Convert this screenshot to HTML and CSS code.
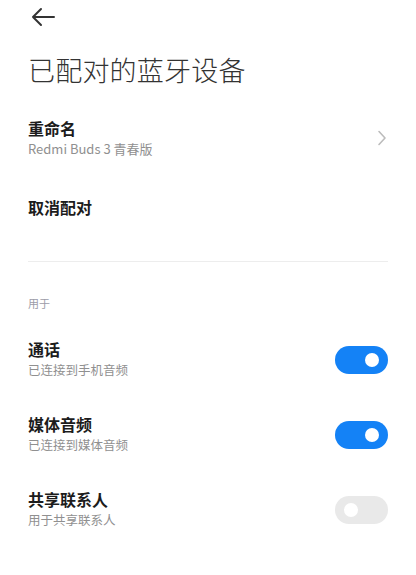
FILE: index.html
```html
<!DOCTYPE html>
<html lang="zh-CN">
  <head>
    <meta charset="UTF-8" />
    <meta name="viewport" content="width=device-width, initial-scale=1" />
    <title>已配对的蓝牙设备</title>
    <link rel="stylesheet" href="styles.css">
  </head>
  <body>
    <div class="page">
      <div class="toolbar">
        <svg class="back" width="26" height="20" viewBox="0 0 26 20">
          <path d="M3 10 H24 M11 2 L3 10 L11 18" fill="none" stroke="#333" stroke-width="2" stroke-linecap="round" stroke-linejoin="round" />
        </svg>
      </div>

      <h1>已配对的蓝牙设备</h1>

      <div class="item rename">
        <div class="text">
          <div class="title">重命名</div>
          <div class="summary">Redmi Buds 3 青春版</div>
        </div>
        <svg class="chevron" width="10" height="16" viewBox="0 0 10 16">
          <path d="M2 1.5 L8 8 L2 14.5" fill="none" stroke="#bcbcbc" stroke-width="1.6" stroke-linecap="round" stroke-linejoin="round" />
        </svg>
      </div>

      <div class="item unpair">
        <div class="title">取消配对</div>
      </div>

      <div class="divider"></div>

      <div class="section-label">用于</div>

      <div class="item switch-row">
        <div class="text">
          <div class="title">通话</div>
          <div class="summary">已连接到手机音频</div>
        </div>
        <span class="switch on"></span>
      </div>

      <div class="item switch-row">
        <div class="text">
          <div class="title">媒体音频</div>
          <div class="summary">已连接到媒体音频</div>
        </div>
        <span class="switch on"></span>
      </div>

      <div class="item switch-row">
        <div class="text">
          <div class="title">共享联系人</div>
          <div class="summary">用于共享联系人</div>
        </div>
        <span class="switch"></span>
      </div>
    </div>
  </body>
</html>
```

FILE: styles.css
```css
body {
  margin: 0;
  background: #fff;
  font-family: "Noto Sans CJK SC", "Noto Sans", sans-serif;
}
.page {
  padding: 0 28px;
}
.toolbar {
  height: 34px;
  display: flex;
  align-items: center;
}
.back {
  margin-left: 2px;
}
h1 {
  margin: 18px 0 0;
  font-size: 27px;
  line-height: 36px;
  font-weight: 300;
  color: #333;
  letter-spacing: 0.2px;
}
.item {
  display: flex;
  align-items: center;
  justify-content: space-between;
}
.title {
  font-size: 16px;
  line-height: 22px;
  font-weight: 700;
  color: #1c1c1c;
}
.summary {
  font-size: 12.5px;
  line-height: 18px;
  margin-top: 1px;
  color: #909090;
}
.rename {
  margin-top: 14px;
  padding: 15px 0;
}
.rename .summary {
  font-size: 13px;
}
.chevron {
  margin-right: 1px;
}
.unpair {
  padding-top: 23px;
}
.divider {
  height: 1px;
  background: #ededed;
  margin-top: 43px;
}
.section-label {
  margin-top: 34px;
  font-size: 11px;
  line-height: 14px;
  color: #9c9ca8;
}
.section-label + .switch-row {
  margin-top: 10px;
}
.switch-row {
  padding: 18px 0 16px;
}
.switch {
  position: relative;
  width: 53px;
  height: 28px;
  border-radius: 14px;
  background: #e9e9e9;
  margin-top: 2px;
}
.switch::after {
  content: "";
  position: absolute;
  top: 7px;
  left: 9px;
  width: 14px;
  height: 14px;
  border-radius: 50%;
  background: #fff;
}
.switch.on {
  background: #1482f6;
}
.switch.on::after {
  left: auto;
  right: 9px;
}
```
